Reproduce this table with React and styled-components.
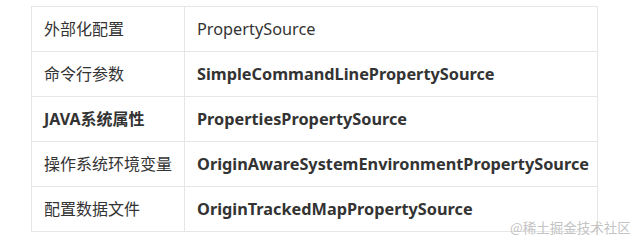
import React from 'react';
import styled, { createGlobalStyle } from 'styled-components';

const Global = createGlobalStyle`
  html, body {
    margin: 0;
    padding: 0;
    background: #fff;
  }
  body {
    font-family: "Noto Sans", "Noto Sans CJK SC", sans-serif;
    color: #333;
  }
`;

const Page = styled.div`
  position: relative;
  width: 639px;
  height: 244px;
  padding: 6px 0 0 31px;
  box-sizing: border-box;
`;

const Table = styled.table`
  border-collapse: collapse;
  width: 567px;
  font-size: 16px;
  table-layout: fixed;
`;

const Cell = styled.td`
  border: 1px solid #e6e6e6;
  height: 45px;
  padding: 0 12px;
  box-sizing: border-box;
  width: ${(p) => (p.$first ? '153px' : 'auto')};
  font-weight: ${(p) => (p.$bold ? 700 : 400)};
  font-size: ${(p) => (p.$first ? '16px' : '16.3px')};
  line-height: 24px;
  white-space: nowrap;
`;

const Watermark = styled.div`
  position: absolute;
  left: 510px;
  top: 217px;
  font-size: 13.5px;
  line-height: 20px;
  color: #c4c4c4;
  font-family: "Noto Sans CJK SC", sans-serif;
  white-space: nowrap;
`;

const rows = [
  ['外部化配置', 'PropertySource', false],
  ['命令行参数', 'SimpleCommandLinePropertySource', true],
  ['JAVA系统属性', 'PropertiesPropertySource', true],
  ['操作系统环境变量', 'OriginAwareSystemEnvironmentPropertySource', true],
  ['配置数据文件', 'OriginTrackedMapPropertySource', true],
];

export default function App() {
  return (
    <Page>
      <Global />
      <Table>
        <tbody>
          {rows.map(([a, b, bold], i) => (
            <tr key={i}>
              <Cell $first $bold={a.startsWith('JAVA')}>{a}</Cell>
              <Cell $bold={bold}>{b}</Cell>
            </tr>
          ))}
        </tbody>
      </Table>
      <Watermark>@稀土掘金技术社区</Watermark>
    </Page>
  );
}
